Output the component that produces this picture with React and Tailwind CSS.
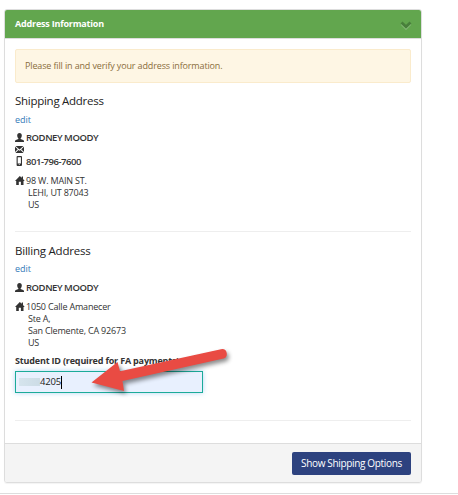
import React from "react";

function UserIcon() {
  return (
    <svg viewBox="0 0 9 9" className="mb-px h-[9px] w-[9px] shrink-0" fill="currentColor">
      <path d="M4.500 0C3 0 2.200 1 2.200 2.500c0 1.200.5 2.200 1.200 2.900V6L.9 6.900C.3 7.200 0 7.500 0 8v1h9V8c0-.5-.3-.8-.9-1.100L5.600 6v-.6c.7-.7 1.200-1.700 1.200-2.900C6.800 1 6 0 4.500 0Z" />
    </svg>
  );
}

function MailIcon() {
  return (
    <svg viewBox="0 0 9 7" className="h-[7px] w-[9px] shrink-0" fill="currentColor">
      <path d="M.5 0h8L4.500 3.500ZM0 .8 2.800 3.300 0 5.900ZM9 .8 6.200 3.300 9 5.900ZM.4 7 3.400 3.900l1.100.9 1.100-.9 3 3.100Z" />
    </svg>
  );
}

function PhoneIcon() {
  return (
    <svg viewBox="0 0 9 10" className="mb-[2px] h-[10px] w-[9px] shrink-0" fill="currentColor">
      <path fillRule="evenodd" d="M2.500 0h3.600q.9 0 .9.900v8.200q0 .9-.9.900H2.500q-.9 0-.9-.9V.9Q1.600 0 2.500 0ZM2.700 1.200v6.300h3.200V1.200ZM3.800 8.300v.8h1v-.8Z" />
    </svg>
  );
}

function HomeIcon() {
  return (
    <svg viewBox="0 0 10 9" className="mb-px h-[9px] w-[10px] shrink-0" fill="currentColor">
      <path d="M4.800 0 6.800 1.800V.6H8V3L9.700 4.900H8.500V9H5.900V5.800H3.800V9H1.200V4.900H0Z" />
    </svg>
  );
}

function Name() {
  return (
    <div className="flex h-3 items-center gap-[2px] text-[9.5px] font-semibold">
      <UserIcon />
      <span className="tracking-[-0.46px]">RODNEY MOODY</span>
    </div>
  );
}

function Address({ lines }) {
  return (
    <div className="text-[9px] leading-3 tracking-[-0.19px]">
      <div className="flex h-3 items-center gap-px">
        <HomeIcon />
        <span>{lines[0]}</span>
      </div>
      {lines.slice(1).map((line) => (
        <div key={line} className="pl-[13px]">{line}</div>
      ))}
    </div>
  );
}

export default function App() {
  return (
    <main className="relative h-[495px] w-[458px] overflow-hidden bg-white pt-[9px] font-['Open_Sans',sans-serif] text-[9px] leading-3 text-[#333] whitespace-nowrap">
      <section className="ml-1 h-[474px] w-[418px] rounded-[3px] border border-[#ddd] shadow-[0_1px_1px_rgba(0,0,0,0.05)]">
        <header className="flex h-[29px] items-center justify-between rounded-t-[2px] border-b border-[#ddd] bg-[#62a64e] pr-[9px] pl-[10px] text-white">
          <h2 className="text-[9px] font-bold tracking-[-0.2px]">Address Information</h2>
          <svg viewBox="0 0 12 9" className="mt-[3px] h-[9px] w-3" fill="none">
            <path d="m1.500 3 4.500 4.500L10.500 3" stroke="#8dbd7f" strokeWidth="2" />
            <path d="M1.500 1.500 6 5.800l4.500-4.300" stroke="#487f3b" strokeWidth="2.800" />
          </svg>
        </header>
        <div className="h-[405px] px-[10px] pt-[10px]">
          <div className="flex h-[34px] items-center rounded-[2px] border border-[#faebcc] bg-[#fef6e4] px-[9px] text-[9px] tracking-[-0.14px] text-[#8a6d3b]">
            Please fill in and verify your address information.
          </div>
          <h3 className="mt-[11px] h-[14px] text-[11.5px] leading-[14px] tracking-[-0.27px] text-[#222]">Shipping Address</h3>
          <a className="mt-[6px] block h-3 text-[#337ab7]">edit</a>
          <div className="mt-[6px]"><Name /></div>
          <div className="flex h-[10px] items-center"><MailIcon /></div>
          <div className="mt-[2px] flex h-3 items-center gap-[2px] text-[9.5px] font-semibold">
            <PhoneIcon />
            <span className="tracking-[-0.46px]">801-796-7600</span>
          </div>
          <div className="mt-[7px]"><Address lines={["98 W. MAIN ST.", "LEHI, UT 87043", "US"]} /></div>
          <hr className="mt-5 border-[#eee]" />
          <h3 className="mt-3 h-[14px] text-[11.5px] leading-[14px] tracking-[-0.22px] text-[#222]">Billing Address</h3>
          <a className="mt-[5px] block h-3 text-[#337ab7]">edit</a>
          <div className="mt-[7px]"><Name /></div>
          <div className="mt-[7px]"><Address lines={["1050 Calle Amanecer", "Ste A,", "San Clemente, CA 92673", "US"]} /></div>
          <label className="mt-[6px] block h-3 text-[9px] font-bold tracking-[-0.18px]">Student ID (required for FA payments)</label>
          <div className="mt-1 flex h-[22px] w-[188px] items-center border border-[#1bab99] bg-[#e8f0fe] pl-[3px] text-[9.5px] tracking-[-0.2px] text-[#222] shadow-[0_0_5px_rgba(102,175,233,0.5)]">
            <span className="h-2 w-[21px] bg-linear-to-r from-[#d5e4ed] to-[#ccdce6]" />
            <span>4205</span>
            <span className="h-[13px] w-px bg-black" />
          </div>
          <hr className="mt-[27px] border-[#eee]" />
        </div>
        <footer className="-mt-px flex h-[39px] items-center justify-end rounded-b-[2px] border-t border-[#ddd] bg-[#f4f4f4] pr-[10px]">
          <button className="flex h-[23px] w-[119px] items-center justify-center rounded-[2px] bg-[#2d427f] text-[10px] tracking-[-0.34px] text-white">
            Show Shipping Options
          </button>
        </footer>
      </section>
      <hr className="mt-[10px] border-[#ddd]" />
      <svg viewBox="0 0 150 60" className="absolute top-[340px] left-[84px] h-[60px] w-[150px] drop-shadow-[2px_3px_2px_rgba(0,0,0,0.45)]">
        <path fill="#e94b43" d="M7.500 42.500 33.500 22 36 31.200 137 9.200Q142 8.500 142.700 13T139.500 18.500L38.500 41 40 51Z" />
      </svg>
    </main>
  );
}
